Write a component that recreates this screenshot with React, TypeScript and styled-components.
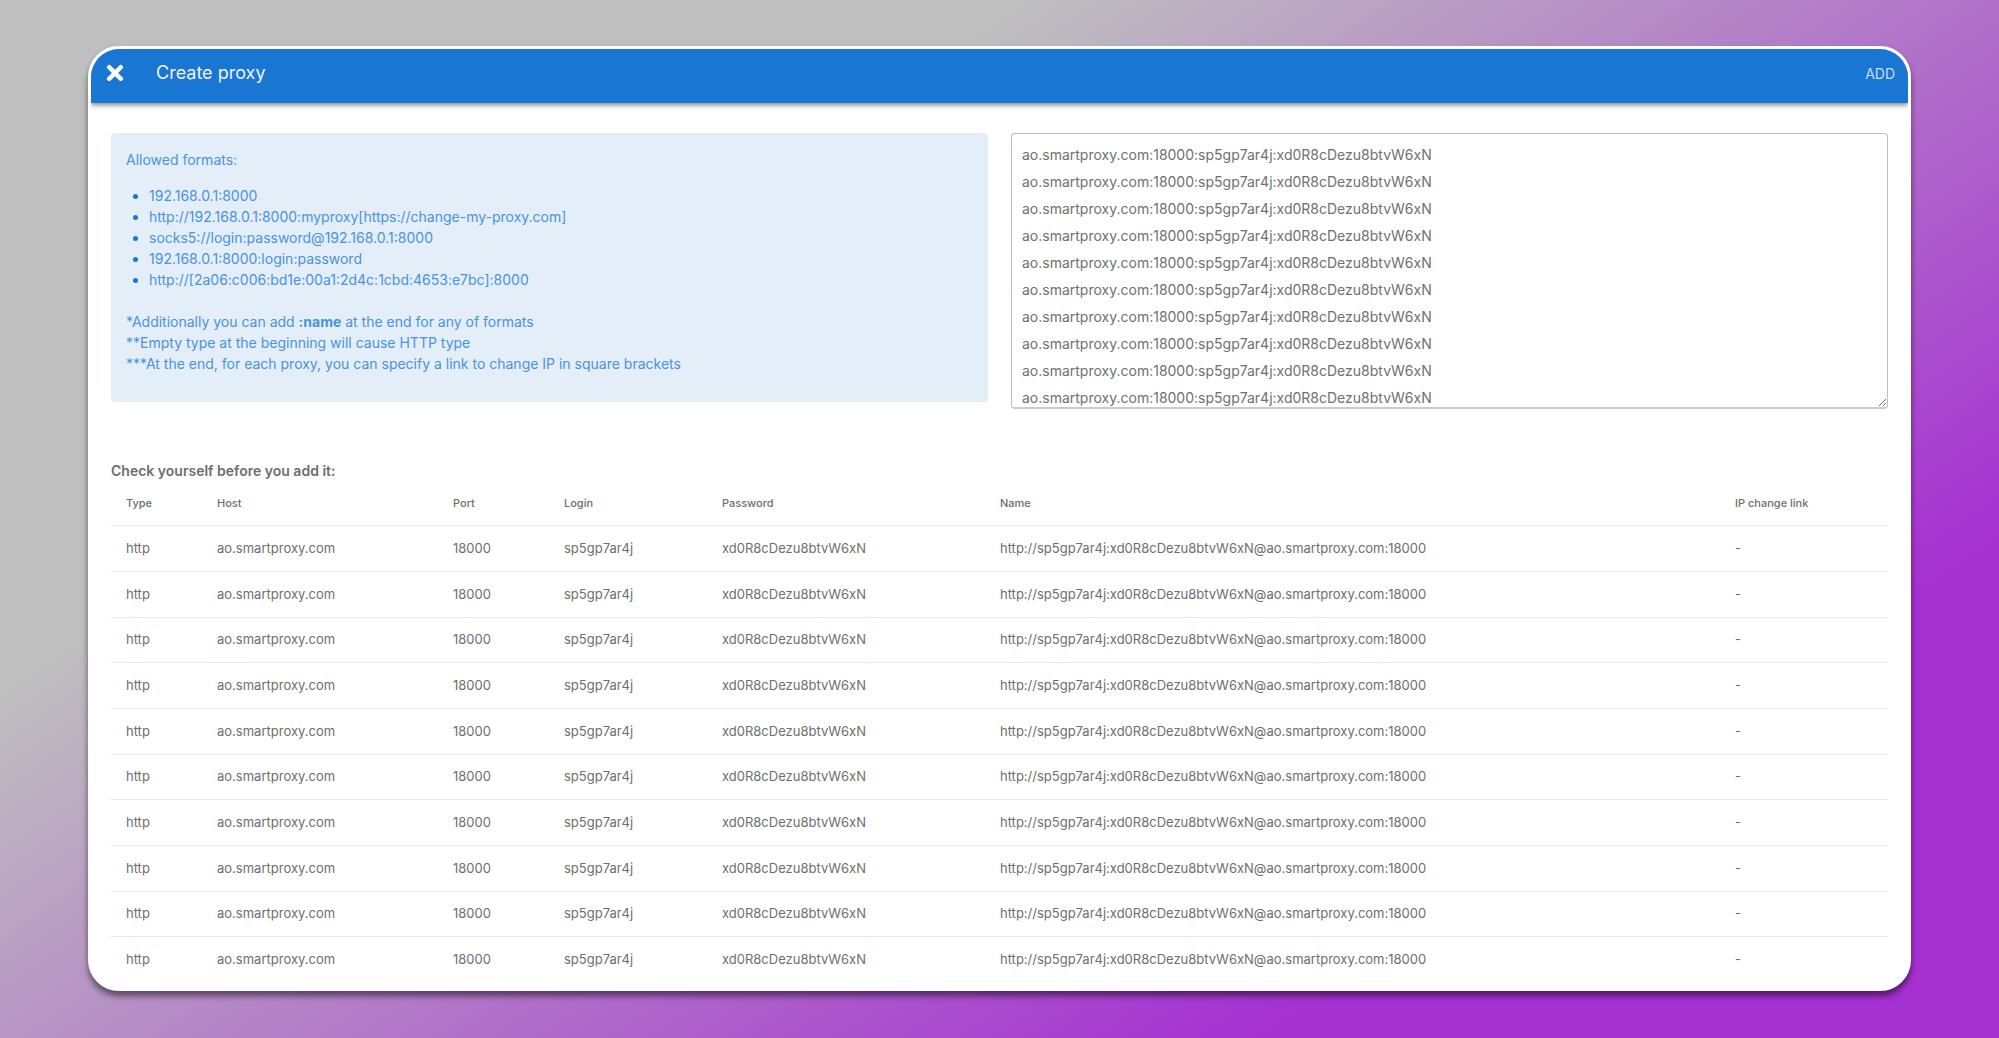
import React, { useState } from 'react';
import styled, { createGlobalStyle } from 'styled-components';
import { FaTimes } from 'react-icons/fa';

const GlobalStyle = createGlobalStyle`
  *, *::before, *::after { box-sizing: border-box; }
  body {
    margin: 0;
    font-family: Inter, Roboto, "Liberation Sans", sans-serif;
    font-size: 14px;
    line-height: 21px;
    color: #6e6e6e;
  }
`;

const Page = styled.div`
  min-height: 100vh;
  padding: 46px 88px 47px;
  background: linear-gradient(146deg, #bfbfbf 29%, #a531d1 79%);
`;

const Dialog = styled.main`
  border: 3px solid #fff;
  border-radius: 31px;
  background: #fff;
  overflow: hidden;
  box-shadow: 0 5px 6px rgba(0, 0, 0, 0.5);
`;

const Header = styled.header`
  display: flex;
  align-items: center;
  height: 54px;
  padding: 0 13px 6px 12px;
  background: #1976d2;
  color: #fff;
  box-shadow: 0 2px 5px rgba(0, 0, 0, 0.5);
`;

const HeaderButton = styled.button`
  display: flex;
  padding: 0;
  border: 0;
  background: none;
  color: inherit;
  font: inherit;
  cursor: pointer;
`;

const AddButton = styled(HeaderButton)`
  margin-left: auto;
  color: #c6ddf4;
`;

const Title = styled.h1`
  margin: 0 0 0 29px;
  font-size: 18px;
  line-height: 24px;
  font-weight: 400;
  color: #edf4fb;
`;

const Content = styled.div`
  padding: 30px 20px 6px;
`;

const Columns = styled.div`
  display: grid;
  grid-template-columns: 1fr 1fr;
  align-items: start;
  gap: 23px;
`;

const Info = styled.section`
  padding: 16px 15px 28px;
  border-radius: 4px;
  background: #e3eef9;
  color: #4a93de;
`;

const Line = styled.p`
  margin: 0;
`;

const FormatList = styled.ul`
  margin: 15px 0 21px;
  padding-left: 23px;

  li::marker {
    color: #1976d2;
  }
`;

const ProxyInput = styled.textarea`
  display: block;
  width: 100%;
  height: 276px;
  padding: 7px 10px 0;
  border: 1px solid #bdbdbd;
  border-bottom: 2px solid #cbcbcb;
  border-radius: 4px;
  background: #fff;
  color: #707070;
  font: inherit;
  line-height: 27px;
  overflow: hidden;
  resize: vertical;
  outline: none;
`;

const Subtitle = styled.h2`
  margin: 50px 0 0;
  font-size: 14px;
  line-height: 24px;
  font-weight: 600;
`;

const Table = styled.table`
  width: 100%;
  table-layout: fixed;
  border-collapse: collapse;
`;

const Column = styled.col<{ $width?: number }>`
  width: ${({ $width }) => ($width ? `${$width}px` : 'auto')};
`;

const HeadCell = styled.th`
  height: 42px;
  padding: 0 15px 1px;
  border-bottom: 1px solid #e6e6e6;
  font-size: 11px;
  font-weight: 500;
  text-align: left;
`;

const Row = styled.tr`
  height: 46px;

  &:nth-child(3n) {
    height: 45px;
  }

  &:not(:last-child) {
    border-bottom: 1px solid #e6e6e6;
  }
`;

const Cell = styled.td`
  padding: 0 15px;
  font-size: 13px;
`;

const formats = [
  '192.168.0.1:8000',
  'http://192.168.0.1:8000:myproxy[https://change-my-proxy.com]',
  'socks5://login:password@192.168.0.1:8000',
  '192.168.0.1:8000:login:password',
  'http://[2a06:c006:bd1e:00a1:2d4c:1cbd:4653:e7bc]:8000',
];

const columns: { label: string; width?: number }[] = [
  { label: 'Type', width: 91 },
  { label: 'Host', width: 236 },
  { label: 'Port', width: 111 },
  { label: 'Login', width: 158 },
  { label: 'Password', width: 278 },
  { label: 'Name' },
  { label: 'IP change link', width: 168 },
];

const initialText = Array(10)
  .fill('ao.smartproxy.com:18000:sp5gp7ar4j:xd0R8cDezu8btvW6xN')
  .join('\n');

const parseLine = (line: string) => {
  const [host = '', port = '', login = '', password = ''] = line.split(':');
  return ['http', host, port, login, password, `http://${login}:${password}@${host}:${port}`, '-'];
};

export default function App() {
  const [text, setText] = useState(initialText);
  const rows = text.split('\n').filter(Boolean).map(parseLine);

  return (
    <Page>
      <GlobalStyle />
      <Dialog>
        <Header>
          <HeaderButton type="button" aria-label="Close">
            <FaTimes size={24} />
          </HeaderButton>
          <Title>Create proxy</Title>
          <AddButton type="button">ADD</AddButton>
        </Header>
        <Content>
          <Columns>
            <Info>
              <Line>Allowed formats:</Line>
              <FormatList>
                {formats.map((format) => (
                  <li key={format}>{format}</li>
                ))}
              </FormatList>
              <Line>
                *Additionally you can add <b>:name</b> at the end for any of formats
              </Line>
              <Line>**Empty type at the beginning will cause HTTP type</Line>
              <Line>***At the end, for each proxy, you can specify a link to change IP in square brackets</Line>
            </Info>
            <ProxyInput
              aria-label="Proxies"
              spellCheck={false}
              value={text}
              onChange={(event) => setText(event.target.value)}
            />
          </Columns>
          <Subtitle>Check yourself before you add it:</Subtitle>
          <Table>
            <colgroup>
              {columns.map(({ label, width }) => (
                <Column key={label} $width={width} />
              ))}
            </colgroup>
            <thead>
              <tr>
                {columns.map(({ label }) => (
                  <HeadCell key={label} scope="col">
                    {label}
                  </HeadCell>
                ))}
              </tr>
            </thead>
            <tbody>
              {rows.map((cells, index) => (
                <Row key={index}>
                  {cells.map((cell, column) => (
                    <Cell key={column}>{cell}</Cell>
                  ))}
                </Row>
              ))}
            </tbody>
          </Table>
        </Content>
      </Dialog>
    </Page>
  );
}
